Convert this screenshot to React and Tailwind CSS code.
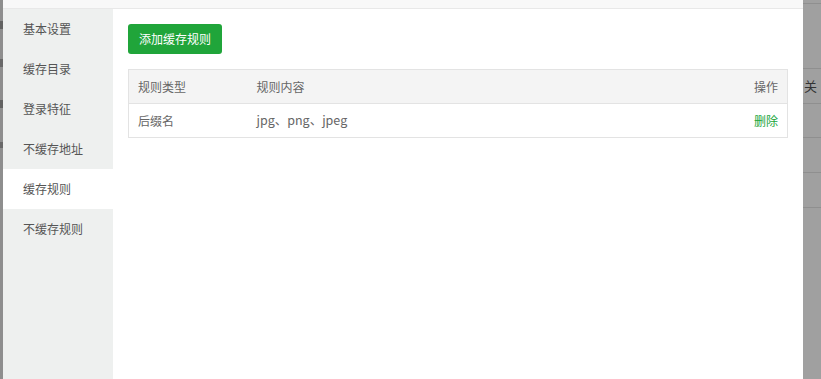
const menu = ["基本设置", "缓存目录", "登录特征", "不缓存地址", "缓存规则", "不缓存规则"];

const rules = [{ type: "后缀名", content: "jpg、png、jpeg" }];

export default function App() {
  const active = "缓存规则";

  return (
    <div
      className="flex w-[821px] h-[379px] overflow-hidden bg-[#9c9c9c] text-xs"
      style={{ fontFamily: '"Noto Sans CJK SC", "Noto Sans", sans-serif' }}
    >
      {/* backdrop, left edge */}
      <div className="w-[3px] shrink-0 bg-[#8e8e8e] flex flex-col">
        <div className="h-[21px]" />
        <div className="h-[8px] bg-[#444] opacity-60" />
        <div className="h-[30px]" />
        <div className="h-[8px] bg-[#444] opacity-50" />
        <div className="h-[33px]" />
        <div className="h-[8px] bg-[#444] opacity-60" />
        <div className="h-[34px]" />
        <div className="h-[6px] bg-[#444] opacity-50" />
      </div>

      {/* modal */}
      <div className="w-[800px] shrink-0 flex flex-col bg-white">
        <div className="h-[9px] bg-[#f8f8f8] border-b border-[#e8e8e8]" />
        <div className="flex flex-1">
          <div className="w-[110px] bg-[#eef0ef]">
            {menu.map((m) => (
              <div
                key={m}
                className={`h-10 flex items-center pl-5 text-[#555] ${m === active ? "bg-white" : ""}`}
              >
                {m}
              </div>
            ))}
          </div>
          <div className="flex-1 px-[15px] pt-[15px]">
            <button className="h-[30px] px-[11px] rounded-[3px] bg-[#20a53a] text-white text-xs">
              添加缓存规则
            </button>
            <table className="mt-[15px] w-full border border-[#e3e3e3] border-collapse text-[#666]">
              <thead>
                <tr className="h-[34px] bg-[#f4f4f4]">
                  <th className="font-normal text-left pl-[9px] w-[128px]">规则类型</th>
                  <th className="font-normal text-left">规则内容</th>
                  <th className="font-normal text-right pr-[9px]">操作</th>
                </tr>
              </thead>
              <tbody>
                {rules.map((r) => (
                  <tr key={r.type} className="h-[34px] border-t border-[#e3e3e3]">
                    <td className="pl-[9px]">{r.type}</td>
                    <td className="text-[12.5px]">{r.content}</td>
                    <td className="text-right pr-[9px] text-[#20a53a]">删除</td>
                  </tr>
                ))}
              </tbody>
            </table>
          </div>
        </div>
      </div>

      {/* backdrop, right edge */}
      <div className="flex-1 flex flex-col bg-[#a0a0a0]">
        <div className="h-[4px] border-b border-[#8f8f8f]" />
        <div className="h-[64px]" />
        <div className="h-[35px] border-t border-[#8f8f8f] flex items-center pl-[1px] text-[13px] text-[#333]">关</div>
        <div className="h-[34px] border-t border-[#8f8f8f]" />
        <div className="h-[35px] border-t border-[#8f8f8f]" />
        <div className="h-[35px] border-t border-[#8f8f8f]" />
        <div className="h-[35px] border-t border-[#8f8f8f]" />
      </div>
    </div>
  );
}
